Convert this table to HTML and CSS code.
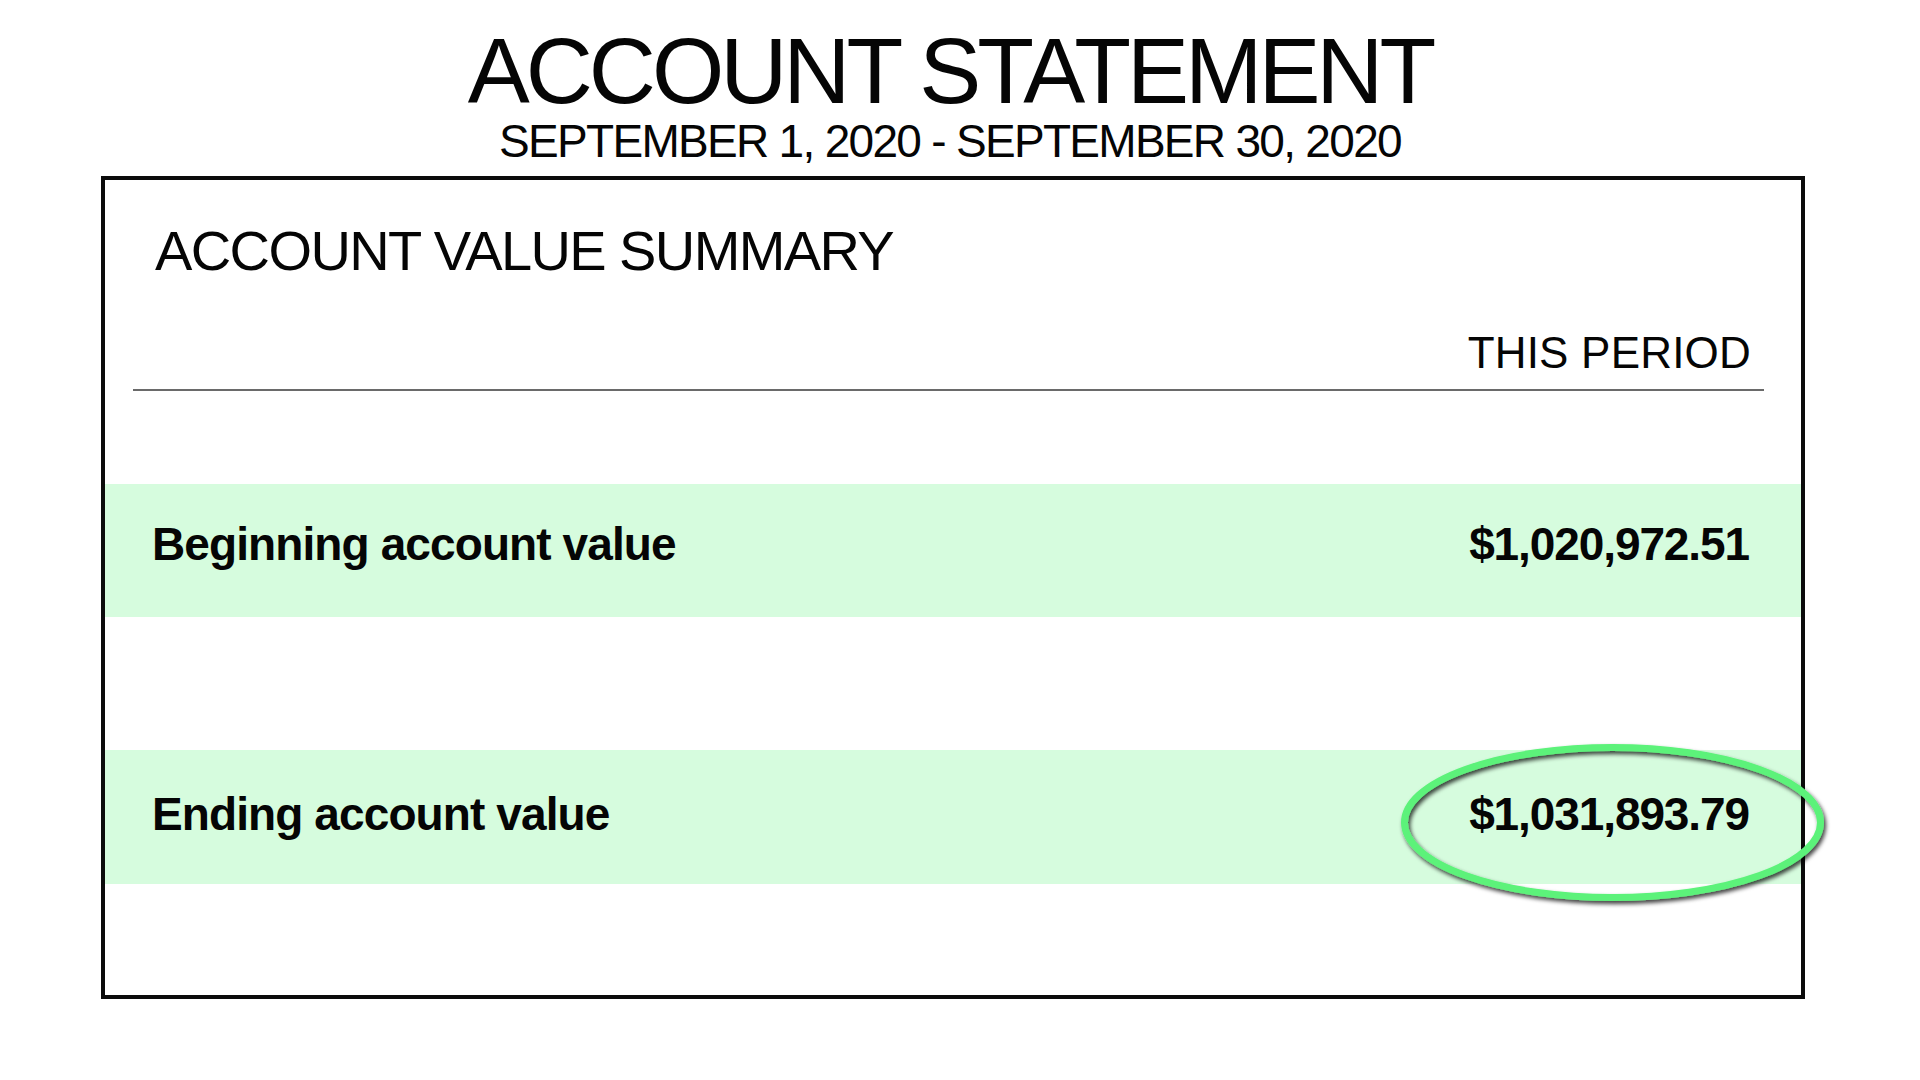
FILE: index.html
```html
<!DOCTYPE html>
<html lang="en">
<head>
<meta charset="utf-8">
<title>Account Statement</title>
<link rel="stylesheet" href="styles.css">
</head>
<body>
<main class="page">
  <header class="head">
    <h1 class="title">ACCOUNT STATEMENT</h1>
    <p class="period">SEPTEMBER 1, 2020 - SEPTEMBER 30, 2020</p>
  </header>
  <section class="card">
    <h2 class="card-title">ACCOUNT VALUE SUMMARY</h2>
    <div class="col-head">THIS PERIOD</div>
    <div class="rows">
      <div class="row">
        <span class="label">Beginning account value</span>
        <span class="value">$1,020,972.51</span>
      </div>
      <div class="row">
        <span class="label">Ending account value</span>
        <span class="value value-marked">$1,031,893.79
          <svg class="circle" viewBox="0 0 435 170" aria-hidden="true">
            <defs>
              <filter id="sh" x="-10%" y="-20%" width="120%" height="140%">
                <feDropShadow dx="2" dy="3" stdDeviation="2" flood-color="#000" flood-opacity="0.75"/>
              </filter>
            </defs>
            <ellipse cx="215.5" cy="83.5" rx="208" ry="75" fill="none" stroke="#5cf27a" stroke-width="7" filter="url(#sh)"/>
          </svg>
        </span>
      </div>
    </div>
  </section>
</main>
</body>
</html>
```
FILE: styles.css
```css
* { box-sizing: border-box; }
html, body { margin: 0; padding: 0; background: #fff; }
body {
  font-family: "Liberation Sans", Arial, Helvetica, sans-serif;
  color: #050505;
  width: 1920px;
  height: 1080px;
  overflow: hidden;
}
.page {
  padding: 25px 0 0 101px;
}
.head {
  width: 1698px;
  text-align: center;
}
.title {
  margin: 0;
  font-size: 93px;
  line-height: 93px;
  font-weight: 400;
  letter-spacing: -4.05px;
}
.period {
  margin: 0;
  font-size: 46px;
  line-height: 46px;
  letter-spacing: -1.7px;
}
.card {
  margin-top: 12px;
  width: 1704px;
  height: 823px;
  border: 4px solid #0b0b0b;
  padding-top: 43px;
}
.card-title {
  margin: 0 0 0 50px;
  font-size: 56px;
  line-height: 56px;
  font-weight: 400;
  letter-spacing: -1.6px;
}
.col-head {
  margin: 52px 37px 0 28px;
  padding: 0 13px 14px 0;
  text-align: right;
  font-size: 44px;
  line-height: 44px;
  letter-spacing: 0.2px;
  border-bottom: 2px solid #6a6a6a;
}
.rows {
  margin-top: 93px;
  display: flex;
  flex-direction: column;
  gap: 133px;
}
.row {
  height: 133px;
  background: #d6fcde;
  display: flex;
  justify-content: space-between;
  align-items: flex-start;
  padding: 37px 52px 0 47px;
  font-size: 46px;
  line-height: 46px;
  font-weight: 700;
}
.row + .row { height: 134px; padding-top: 41px; }
.label { letter-spacing: -0.9px; }
.value { letter-spacing: -1.1px; position: relative; }
.circle {
  position: absolute;
  left: -72px;
  top: -52px;
  width: 435px;
  height: 170px;
  overflow: visible;
}
```
